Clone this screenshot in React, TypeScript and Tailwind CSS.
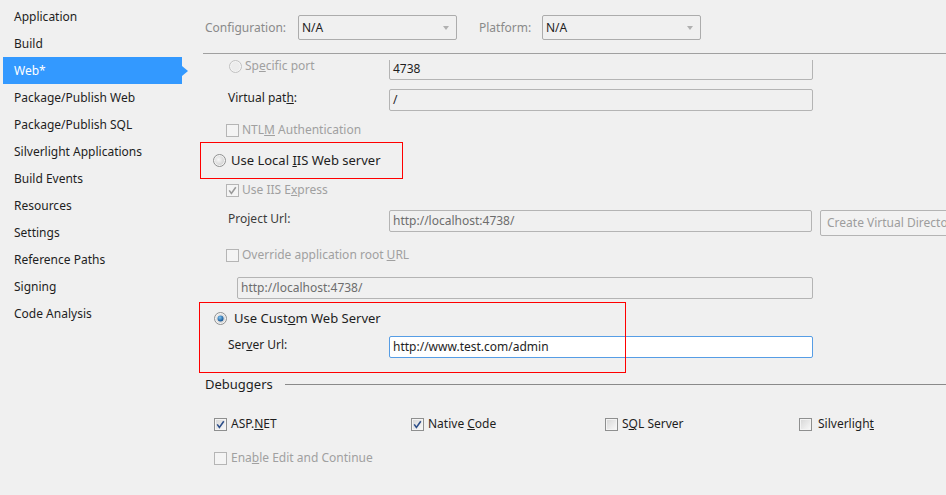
import React from "react";

const navItems = [
  "Application",
  "Build",
  "Web*",
  "Package/Publish Web",
  "Package/Publish SQL",
  "Silverlight Applications",
  "Build Events",
  "Resources",
  "Settings",
  "Reference Paths",
  "Signing",
  "Code Analysis",
];

const CheckBox: React.FC<{ checked?: boolean; disabled?: boolean }> = ({ checked, disabled }) => (
  <svg width="13" height="13" viewBox="0 0 13 13" className="shrink-0">
    <defs>
      <linearGradient id={disabled ? "cbd" : "cbe"} x1="0" y1="0" x2="1" y2="1">
        <stop offset="0" stopColor={disabled ? "#f4f4f4" : "#d9d9d9"} />
        <stop offset="1" stopColor={disabled ? "#f4f4f4" : "#f7f7f7"} />
      </linearGradient>
    </defs>
    <rect x="0.5" y="0.5" width="12" height="12" fill="#f4f4f4" stroke={disabled ? "#b5b5b5" : "#8e8f8f"} />
    <rect x="2" y="2" width="9" height="9" fill={`url(#${disabled ? "cbd" : "cbe"})`} />
    {checked && (
      <path
        d="M3.2 6.4 L5.4 9.4 L9.8 3.2"
        fill="none"
        stroke={disabled ? "#9a9a9a" : "#2d4f8a"}
        strokeWidth="1.6"
      />
    )}
  </svg>
);

const Radio: React.FC<{ checked?: boolean; disabled?: boolean }> = ({ checked, disabled }) => (
  <svg width="13" height="13" viewBox="0 0 13 13" className="shrink-0">
    <defs>
      <radialGradient id="rg" cx="0.4" cy="0.4" r="0.7">
        <stop offset="0" stopColor="#f8f8f8" />
        <stop offset="1" stopColor="#cfcfcf" />
      </radialGradient>
      <radialGradient id="rb" cx="0.4" cy="0.35" r="0.7">
        <stop offset="0" stopColor="#7ec3f2" />
        <stop offset="1" stopColor="#0a4a8a" />
      </radialGradient>
    </defs>
    <circle cx="6.5" cy="6.5" r="6" fill="#f4f4f4" stroke={disabled ? "#c0c0c0" : "#8e8f8f"} />
    <circle cx="6.5" cy="6.5" r="4.5" fill={disabled ? "#ececec" : "url(#rg)"} />
    {checked && <circle cx="6.5" cy="6.5" r="3" fill="url(#rb)" />}
  </svg>
);

const TextBox: React.FC<{ value: string; className?: string; active?: boolean; muted?: boolean }> = ({
  value,
  className,
  active,
  muted,
}) => (
  <div
    className={`h-[22px] rounded-[2px] border px-[3px] flex items-center ${
      active ? "border-[#569de5] bg-white text-[#1e1e1e]" : "border-[#b4b4b4] bg-[#f0f0f0]"
    } ${muted ? "text-[#6d6d6d]" : "text-[#1e1e1e]"} ${className ?? ""}`}
  >
    {value}
  </div>
);

const Combo: React.FC<{ value: string }> = ({ value }) => (
  <div className="h-[25px] w-[159px] rounded-[2px] border border-[#acacac] bg-[#f0f0f0] flex items-center justify-between pl-[3px] pr-[7px] text-[#1e1e1e]">
    <span>{value}</span>
    <span className="w-0 h-0 border-l-[3px] border-r-[3px] border-t-[4px] border-l-transparent border-r-transparent border-t-[#b0b0b0]" />
  </div>
);

export default function App() {
  return (
    <div
      className="flex h-[495px] w-[946px] overflow-hidden bg-[#f0f0f0] text-[12px] leading-[16px] text-[#1e1e1e]"
      style={{ fontFamily: '"Segoe UI", "Noto Sans", sans-serif' }}
    >
      {/* sidebar */}
      <div className="w-[190px] shrink-0 pt-[3px]">
        {navItems.map((item) => {
          const selected = item === "Web*";
          return (
            <div key={item} className="relative h-[27px] flex items-center">
              <div
                className={`ml-[3px] w-[179px] h-full flex items-center pl-[11px] ${
                  selected ? "bg-[#3399ff] text-white" : ""
                }`}
              >
                {item}
              </div>
              {selected && (
                <span className="w-0 h-0 border-t-[5px] border-b-[5px] border-l-[6px] border-t-transparent border-b-transparent border-l-[#3399ff]" />
              )}
            </div>
          );
        })}
      </div>

      {/* main */}
      <div className="relative flex-1">
        <div className="h-[53px] pt-[15px] pl-[15px] flex items-start">
          <div className="h-[25px] flex items-center">
            <span className="w-[93px] text-[#8a8a8a]">Configuration:</span>
            <Combo value="N/A" />
            <span className="ml-[22px] w-[63px] text-[#8a8a8a]">Platform:</span>
            <Combo value="N/A" />
          </div>
        </div>
        <div className="ml-[13px] border-t border-[#a0a0a0]" />

        <div className="mt-[6px] overflow-hidden">
          <div className="-mt-[2px]">
            {/* specific port */}
            <div className="flex items-start h-[22px]">
              <div className="w-[199px] pl-[39px] flex items-center gap-[3px] text-[#a0a0a0]">
                <Radio disabled />
                <span>
                  Sp<u>e</u>cific port
                </span>
              </div>
              <TextBox value="4738" className="w-[424px]" />
            </div>

            {/* virtual path */}
            <div className="mt-[9px] flex items-start h-[22px]">
              <div className="w-[199px] pl-[38px] pt-[1px]">
                Virtual pat<u>h</u>:
              </div>
              <TextBox value="/" className="w-[424px]" />
            </div>

            {/* NTLM */}
            <div className="mt-[11px] pl-[36px] flex items-center gap-[3px] h-[16px] text-[#a0a0a0]">
              <CheckBox disabled />
              <span>
                NTL<u>M</u> Authentication
              </span>
            </div>

            {/* Use local IIS */}
            <div className="mt-[14px] pl-[23px] flex items-center gap-[5px] h-[16px] text-[13px]">
              <Radio />
              <span>
                Use Local <u>I</u>IS Web server
              </span>
            </div>

            {/* IIS Express */}
            <div className="mt-[14px] pl-[36px] flex items-center gap-[3px] h-[16px] text-[#a0a0a0]">
              <CheckBox checked disabled />
              <span>
                Use IIS E<u>x</u>press
              </span>
            </div>

            {/* Project url */}
            <div className="mt-[12px] flex items-start h-[26px]">
              <div className="w-[199px] pl-[38px] pt-[1px] text-[#3c3c3c]">
                Pro<u>j</u>ect Url:
              </div>
              <TextBox value="http://localhost:4738/" muted className="w-[423px]" />
              <div className="ml-[8px] h-[26px] w-[150px] shrink-0 rounded-[2px] border border-[#b4b4b4] bg-[#f2f2f2] pl-[6px] flex items-center text-[#9d9d9d] whitespace-nowrap">
                Create Virtual Directory
              </div>
            </div>

            {/* Override */}
            <div className="mt-[11px] pl-[36px] flex items-center gap-[3px] h-[16px] text-[#a0a0a0]">
              <CheckBox disabled />
              <span>
                Override application root <u>U</u>RL
              </span>
            </div>

            <div className="mt-[14px] pl-[47px]">
              <TextBox value="http://localhost:4738/" muted className="w-[576px]" />
            </div>

            {/* Custom server */}
            <div className="mt-[11px] pl-[24px] flex items-center gap-[7px] h-[16px] text-[13px]">
              <Radio checked />
              <span>
                Use Cust<u>o</u>m Web Server
              </span>
            </div>

            <div className="mt-[10px] flex items-start h-[22px]">
              <div className="w-[199px] pl-[38px] pt-[1px]">
                Ser<u>v</u>er Url:
              </div>
              <TextBox value="http://www.test.com/admin" active className="w-[424px]" />
            </div>
          </div>
        </div>

        {/* Debuggers */}
        <div className="mt-[18px] pl-[15px] flex items-center h-[16px] text-[13px]">
          <span>Debuggers</span>
          <div className="ml-[12px] flex-1 border-t border-[#8a8a8a]" />
        </div>

        <div className="mt-[24px] pl-[24px] grid grid-cols-[197px_194px_194px_1fr] h-[16px] items-center">
          <div className="flex items-center gap-[4px]">
            <CheckBox checked />
            <span>
              ASP.<u>N</u>ET
            </span>
          </div>
          <div className="flex items-center gap-[4px]">
            <CheckBox checked />
            <span>
              Native <u>C</u>ode
            </span>
          </div>
          <div className="flex items-center gap-[4px]">
            <CheckBox />
            <span>
              S<u>Q</u>L Server
            </span>
          </div>
          <div className="flex items-center gap-[6px]">
            <CheckBox />
            <span>
              Silverligh<u>t</u>
            </span>
          </div>
        </div>

        <div className="mt-[18px] pl-[24px] flex items-center gap-[4px] h-[16px] text-[#a0a0a0]">
          <CheckBox disabled />
          <span>
            Ena<u>b</u>le Edit and Continue
          </span>
        </div>

        {/* annotation boxes */}
        <div className="pointer-events-none absolute left-[10px] top-[142px] h-[37px] w-[203px] border border-[#ff0000]" />
        <div className="pointer-events-none absolute left-[9px] top-[302px] h-[71px] w-[427px] border border-[#ff0000]" />
      </div>
    </div>
  );
}
